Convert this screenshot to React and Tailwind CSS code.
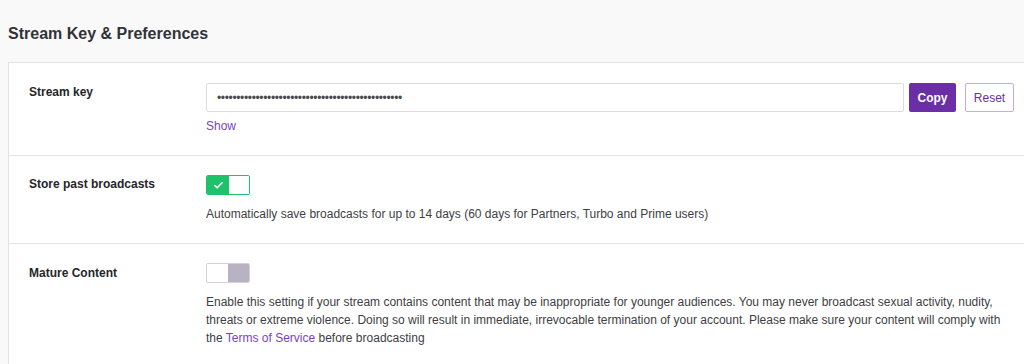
import { Check } from "lucide-react";

function Toggle({ on }) {
  return (
    <div
      className={
        "flex h-[20px] w-[44px] rounded-[2px] border overflow-hidden " +
        (on ? "border-[#1fc26b]" : "border-[#d3d0d8]")
      }
    >
      {on ? (
        <>
          <div className="flex w-[22px] items-center justify-center bg-[#1fc26b]">
            <Check className="h-[11px] w-[11px] text-white" strokeWidth={3.5} />
          </div>
          <div className="flex-1 bg-white" />
        </>
      ) : (
        <>
          <div className="w-[21px] bg-white" />
          <div className="flex-1 bg-[#b8b2c2]" />
        </>
      )}
    </div>
  );
}

export default function App() {
  return (
    <div className="h-[364px] w-[1024px] overflow-hidden bg-[#f9f9f9] font-['Liberation_Sans',Arial,sans-serif]">
      <h1 className="pl-2 pt-[25px] pb-[19px] text-[16px] font-bold leading-[18px] text-[#323239]">
        Stream Key &amp; Preferences
      </h1>

      <div className="ml-2 w-[1030px] border border-[#e2e2e6] bg-white">
        {/* Stream key */}
        <div className="flex border-b border-[#e2e2e6] pt-[20px] pb-[21px]">
          <div className="w-[197px] shrink-0 pl-[20px] text-[12px] font-bold text-[#26262b]">
            Stream key
          </div>
          <div className="w-[808px]">
            <div className="flex gap-[5px]">
              <div className="flex h-[29px] flex-1 items-center rounded-[2px] border border-[#dcdce0] bg-white px-[10px] text-[12px] leading-none tracking-[-0.35px] text-[#4a4a4f]">
                {"•".repeat(48)}
              </div>
              <button className="h-[29px] w-[47px] rounded-[2px] bg-[#6b2ea6] text-[12px] font-bold text-white">
                Copy
              </button>
              <button className="ml-[4px] h-[29px] w-[49px] rounded-[2px] border border-[#c9a9e6] bg-white text-[12px] text-[#6b2ea6]">
                Reset
              </button>
            </div>
            <div className="mt-[6px] text-[12px] leading-[16px] text-[#7b3fbf]">Show</div>
          </div>
        </div>

        {/* Store past broadcasts */}
        <div className="flex border-b border-[#e2e2e6] pt-[19px] pb-[20px]">
          <div className="w-[197px] shrink-0 pl-[20px] text-[12px] font-bold text-[#26262b]">
            Store past broadcasts
          </div>
          <div className="w-[808px]">
            <Toggle on />
            <p className="mt-[10px] text-[12px] leading-[18px] text-[#3e3e44]">
              Automatically save broadcasts for up to 14 days (60 days for Partners, Turbo and Prime users)
            </p>
          </div>
        </div>

        {/* Mature content */}
        <div className="flex pt-[19px] pb-[20px]">
          <div className="w-[197px] shrink-0 pl-[20px] pt-[1px] text-[12px] font-bold text-[#26262b]">
            Mature Content
          </div>
          <div className="w-[808px]">
            <Toggle />
            <p className="mt-[10px] text-[12px] leading-[18px] text-[#3e3e44]">
              Enable this setting if your stream contains content that may be inappropriate for younger
              audiences. You may never broadcast sexual activity, nudity, threats or extreme violence.
              Doing so will result in immediate, irrevocable termination of your account. Please make
              sure your content will comply with the{" "}
              <span className="text-[#7b3fbf]">Terms of Service</span> before broadcasting
            </p>
          </div>
        </div>
      </div>
    </div>
  );
}
